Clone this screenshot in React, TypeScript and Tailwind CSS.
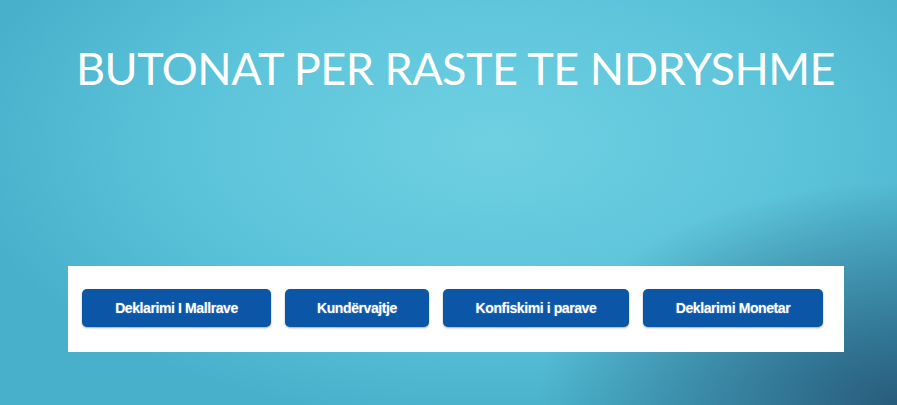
export default function App() {
  const buttons = [
    { label: "Deklarimi I Mallrave", w: "w-[189px]" },
    { label: "Kundërvajtje", w: "w-[144px]" },
    { label: "Konfiskimi i parave", w: "w-[186px]" },
    { label: "Deklarimi Monetar", w: "w-[180px]" },
  ];

  return (
    <div className="h-[405px] w-[897px] overflow-hidden bg-[radial-gradient(ellipse_40%_55%_at_100%_100%,#285b7c_0%,rgba(42,95,128,0)_100%),radial-gradient(ellipse_60%_70%_at_55%_35%,#70d0e2_0%,#5cc4da_55%,#48b0ca_100%)]">
      <div className="h-[266px] pl-[76px] pt-[38px]">
        <h1 className="whitespace-nowrap font-['Lato',sans-serif] text-[45px] font-normal leading-[60px] tracking-[-0.5px] text-white">
          BUTONAT PER RASTE TE NDRYSHME
        </h1>
      </div>

      <div className="ml-[68px] flex h-[86px] w-[776px] gap-[14px] bg-white pl-[14px] pt-[23px]">
        {buttons.map((b) => (
          <button
            key={b.label}
            className={`${b.w} flex h-[38px] items-center justify-center rounded-[5px] bg-[#0b56a6] font-['Liberation_Sans',Arial,sans-serif] text-[14px] font-bold tracking-[-0.4px] text-white shadow-[0_1px_2px_rgba(0,0,0,0.35)] [text-shadow:0_0_2px_rgba(255,255,255,0.35)]`}
          >
            {b.label}
          </button>
        ))}
      </div>
    </div>
  );
}
